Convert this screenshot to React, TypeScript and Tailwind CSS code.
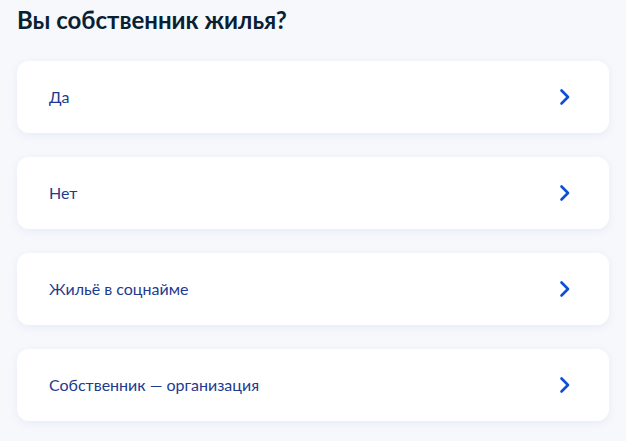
import React from "react";

const options = ["Да", "Нет", "Жильё в соцнайме", "Собственник — организация"];

function Chevron() {
  return (
    <svg width="12" height="18" viewBox="0 0 12 18" fill="none">
      <path d="M2.5 2.5L9 9L2.5 15.5" stroke="#0d4cd3" strokeWidth="2.6" strokeLinecap="round" strokeLinejoin="round" />
    </svg>
  );
}

export default function App() {
  return (
    <div className="min-h-[441px] bg-[#f6f8fc] px-[17px] pt-[4px] pb-5" style={{ fontFamily: "Lato, 'Noto Sans', sans-serif" }}>
      <h1 className="text-[24px] leading-[32px] font-bold text-[#0b1f33] mb-[25px]">Вы собственник жилья?</h1>
      <div className="flex flex-col gap-[24px] w-[592px]">
        {options.map((o) => (
          <button
            key={o}
            className="flex items-center justify-between h-[72px] bg-white rounded-[12px] pl-[32px] pr-[38px] shadow-[0_2px_8px_rgba(100,130,190,0.10)] text-left"
          >
            <span className="text-[16px] text-[#1e3a8f]">{o}</span>
            <Chevron />
          </button>
        ))}
      </div>
    </div>
  );
}
